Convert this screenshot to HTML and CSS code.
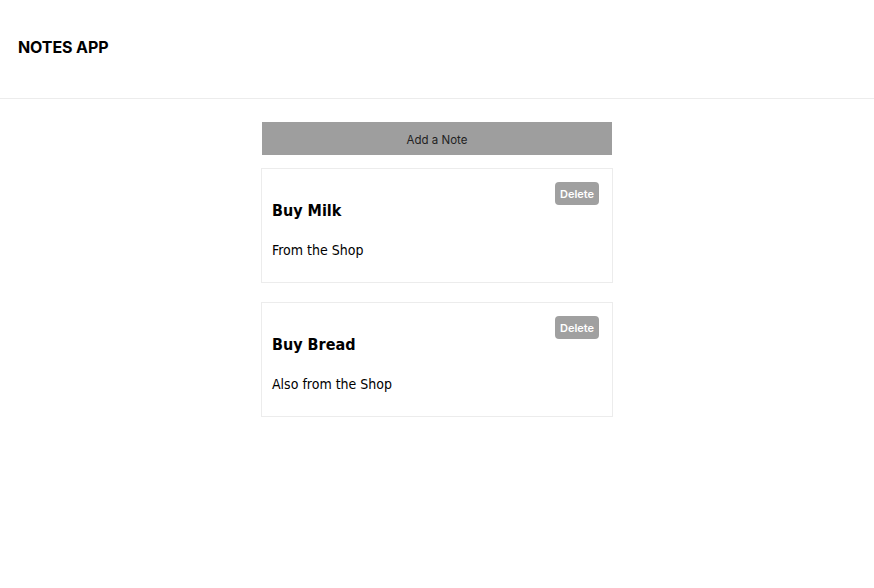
FILE: index.html
```html
<!DOCTYPE html>
<html>
<head>
<meta charset="utf-8">
<link rel="stylesheet" href="styles.css">
</head>
<body>
<header class="header"><h1 class="brand">NOTES APP</h1></header>
<main class="notes">
  <button class="add-btn">Add a Note</button>
  <div class="card">
    <button class="delete-btn">Delete</button>
    <h3 class="card-title">Buy Milk</h3>
    <p class="card-body">From the Shop</p>
  </div>
  <div class="card">
    <button class="delete-btn">Delete</button>
    <h3 class="card-title">Buy Bread</h3>
    <p class="card-body">Also from the Shop</p>
  </div>
</main>
</body>
</html>
```
FILE: styles.css
```css
body {
  margin: 0;
  background: #fff;
  font-family: "Inter", "Liberation Sans", sans-serif;
}
.header {
  height: 99px;
  border-bottom: 1px solid #ececec;
  display: flex;
  align-items: center;
  padding: 0 0 5px 18px;
  box-sizing: border-box;
}
.brand {
  margin: 0;
  font-size: 16px;
  font-weight: 700;
  color: #000;
  letter-spacing: -0.1px;
}
.notes {
  width: 352px;
  margin: 23px auto 0;
}
.add-btn {
  display: block;
  width: 350px;
  height: 33px;
  margin: 0 1px 13px;
  border: none;
  background: #9e9e9e;
  color: #222;
  font-family: "Inter", "Liberation Sans", sans-serif;
  font-size: 11.5px;
  padding: 2px 0 0;
  cursor: pointer;
}
.card {
  display: flow-root;
  border: 1px solid #ececec;
  padding: 0 13px 0 10px;
  margin-bottom: 19px;
  font-family: "DejaVu Sans Condensed", "DejaVu Sans", sans-serif;
}
.delete-btn {
  float: right;
  margin-top: 13px;
  width: 44px;
  height: 23px;
  border: none;
  border-radius: 4px;
  background: #a0a0a0;
  color: #fff;
  font-family: "Inter", "Liberation Sans", sans-serif;
  font-size: 11px;
  font-weight: 600;
  padding: 0;
}
.card-title {
  margin: 32px 0 0;
  font-size: 16px;
  line-height: 20px;
  font-weight: 700;
  color: #000;
}
.card-body {
  margin: 21px 0 23px;
  font-size: 14px;
  line-height: 17px;
  color: #000;
}
```
